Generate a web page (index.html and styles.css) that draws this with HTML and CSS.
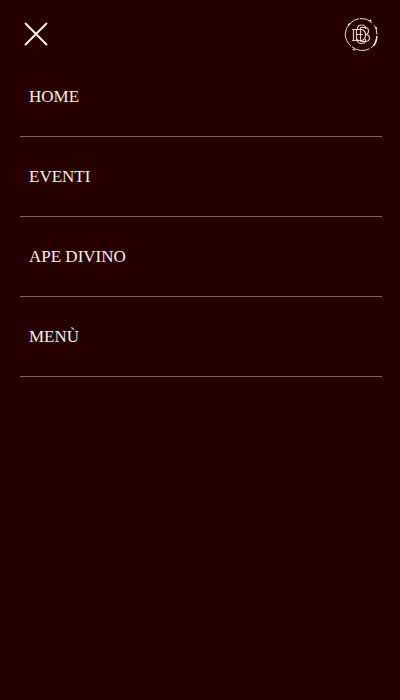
FILE: index.html
```html
<!DOCTYPE html>
<html lang="it">
<head>
<meta charset="utf-8">
<meta name="viewport" content="width=device-width, initial-scale=1">
<title>Menu</title>
<link rel="stylesheet" href="styles.css">
</head>
<body>
<header class="topbar">
  <button class="close" type="button" aria-label="Chiudi">
    <svg viewBox="0 0 24 24" width="24" height="24" aria-hidden="true"><path d="M1 1L23 23M23 1L1 23"/></svg>
  </button>
  <a class="logo" href="#" aria-label="Home">
    <svg viewBox="0 0 44 44" width="44" height="44" aria-hidden="true">
      <path class="ring" d="M10 11.5A16 16 0 0 0 5.2 22A16 16 0 0 0 11 34M12 34.8A16 16 0 0 0 29.5 36.8M31 36A16 16 0 0 0 36.6 25M36.9 22.5A16 16 0 0 0 34.5 13.5M32 10.6A16 16 0 0 0 20 6.5M19.2 6.6A16 16 0 0 0 10.5 11"/>
      <path class="blot" d="M33.5 34A16 16 0 0 0 36.8 24M8 13L10.5 11.2M29.8 7.8L31.2 9.2M12.8 37L14.5 38.2M36 15.2L36.6 17"/>
      <path class="letters" d="M12 17.5H22Q25.5 18.5 25.5 23T22 28.5H12M13.5 17.5V28.5M16.5 17.5V28.5M16.5 22.5H23"/>
      <path class="letters" d="M20.5 15.5H25Q28.5 15.5 28.5 19T25 22.5Q29.5 22.5 29.5 26T25 29.5H20.5M20.5 15.5V29.5"/>
      <path class="letters" d="M25.5 17V16Q25.5 13 21.5 13T17.5 16.5V18M17.5 27V28Q17.5 31.5 21.5 31.5T25.5 28.5V27"/>
    </svg>
  </a>
</header>
<nav aria-label="Principale">
  <ul class="menu">
    <li><a href="#">HOME</a></li>
    <li><a href="#">EVENTI</a></li>
    <li><a href="#">APE DIVINO</a></li>
    <li><a href="#">MENÙ</a></li>
  </ul>
</nav>
</body>
</html>
```
FILE: styles.css
```css
* { box-sizing: border-box; }
body {
  margin: 0;
  min-height: 100vh;
  background: #270000;
  color: #fff0e8;
  font-family: "Liberation Serif", serif;
}
.topbar {
  display: flex;
  align-items: flex-start;
  justify-content: space-between;
  padding: 12px 16px 1px 18px;
}
.close {
  display: flex;
  padding: 10px 6px;
  border: 0;
  background: none;
  color: inherit;
}
.close svg { fill: none; stroke: currentColor; stroke-width: 2; }
.logo { display: flex; color: inherit; }
.logo svg { fill: none; stroke: currentColor; }
.ring { stroke-width: 1; opacity: .9; }
.blot { stroke-width: 1.4; }
.letters { stroke-width: 1.2; opacity: .85; }
.menu {
  list-style: none;
  margin: 0 18px 0 20px;
  padding: 0;
}
.menu a {
  display: block;
  height: 80px;
  padding: 30px 9px 0;
  border-bottom: 1px solid #876060;
  color: inherit;
  font-size: 17px;
  line-height: 20px;
  text-decoration: none;
}
```
